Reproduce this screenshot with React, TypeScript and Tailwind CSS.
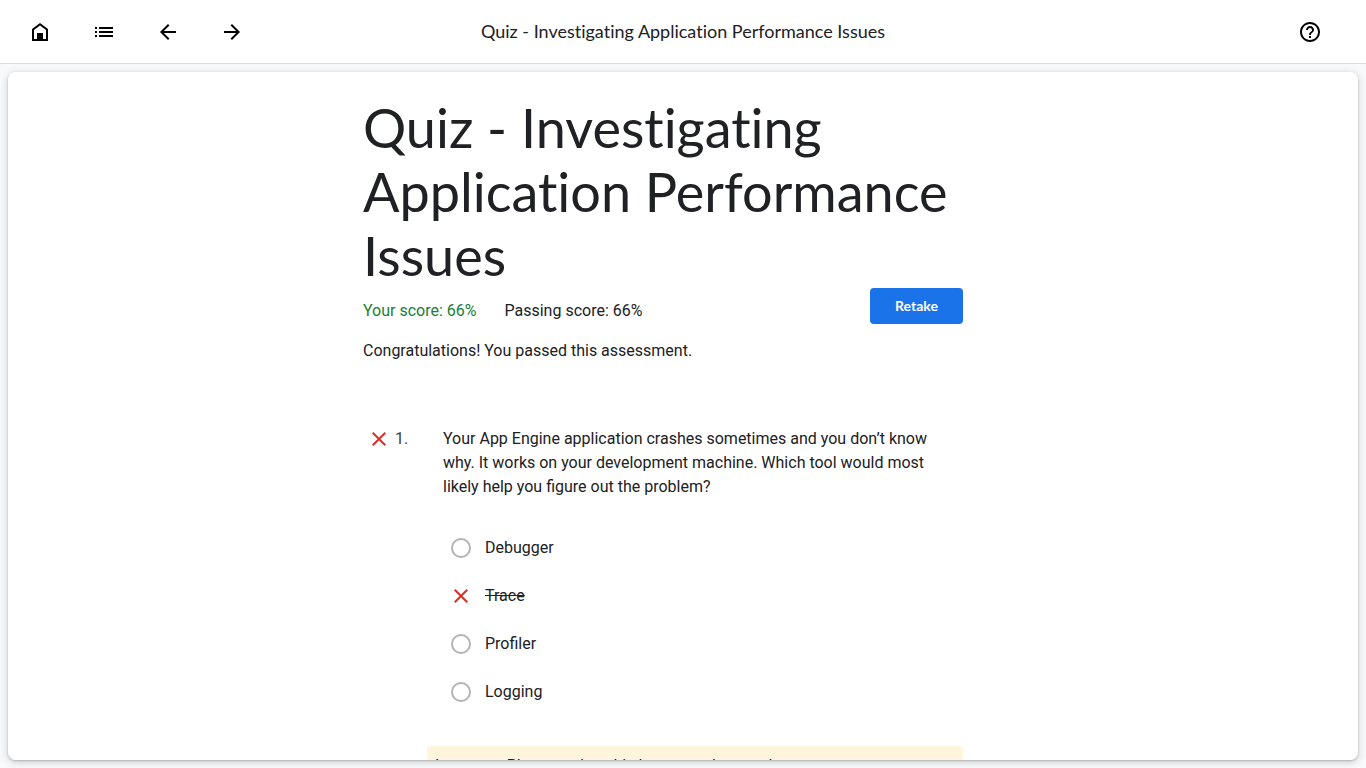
import React, { useState } from "react";

const paths = {
  home: "M4 21V9l8-6 8 6v12H4zM6 19h3v-6h6v6h3v-9l-6-4.5L6 10v9z",
  list: "M3 13h2v-2H3v2zm0 4h2v-2H3v2zm0-8h2V7H3v2zm4 4h14v-2H7v2zm0 4h14v-2H7v2zM7 7v2h14V7H7z",
  back: "M20 11H7.83l5.59-5.59L12 4l-8 8 8 8 1.41-1.41L7.83 13H20v-2z",
  forward: "M12 4l-1.41 1.41L16.17 11H4v2h12.17l-5.58 5.59L12 20l8-8z",
  help: "M11 18h2v-2h-2v2zm1-16C6.48 2 2 6.48 2 12s4.48 10 10 10 10-4.48 10-10S17.52 2 12 2zm0 18c-4.41 0-8-3.59-8-8s3.59-8 8-8 8 3.59 8 8-3.59 8-8 8zm0-14c-2.21 0-4 1.79-4 4h2c0-1.1.9-2 2-2s2 .9 2 2c0 2-3 1.75-3 5h2c0-2.25 3-2.5 3-5 0-2.21-1.79-4-4-4z",
  close:
    "M19 6.41L17.59 5 12 10.59 6.41 5 5 6.41 10.59 12 5 17.59 6.41 19 12 13.41 17.59 19 19 17.59 13.41 12z",
};

function Icon({ name, className = "" }: { name: keyof typeof paths; className?: string }) {
  return (
    <svg viewBox="0 0 24 24" aria-hidden="true" fill="currentColor" className={`size-6 shrink-0 ${className}`}>
      <path d={paths[name]} fillRule={name === "home" ? "evenodd" : "nonzero"} />
    </svg>
  );
}

function IconButton({ name, label }: { name: keyof typeof paths; label: string }) {
  return (
    <button
      type="button"
      aria-label={label}
      className="flex size-12 items-center justify-center rounded-full text-black hover:bg-gray-100"
    >
      <Icon name={name} />
    </button>
  );
}

const options = ["Debugger", "Trace", "Profiler", "Logging"];
const wrongAnswer = "Trace";

function Option({ text, checked, onSelect }: { text: string; checked: boolean; onSelect: () => void }) {
  const wrong = text === wrongAnswer;
  return (
    <label className="flex h-12 items-center gap-3 pl-1.5">
      <input
        type="radio"
        name="question-1"
        checked={checked}
        onChange={onSelect}
        className={
          wrong
            ? "sr-only"
            : "mx-0.5 size-5 shrink-0 appearance-none rounded-full border-2 border-[#b3b3b3] checked:border-[6px] checked:border-[#1a73e8]"
        }
      />
      {wrong && <Icon name="close" className="text-[#d93025]" />}
      <span className={wrong ? "line-through" : ""}>{text}</span>
    </label>
  );
}

export default function App() {
  const [answer, setAnswer] = useState(wrongAnswer);
  return (
    <div className="flex h-screen flex-col bg-[#f8f9fa] font-['Roboto',sans-serif] text-base text-[#202124]">
      <header className="grid h-16 shrink-0 grid-cols-[1fr_auto_1fr] items-center border-b border-[#dadce0] bg-white pr-8 pl-4">
        <nav className="flex gap-4" aria-label="Course">
          <IconButton name="home" label="Home" />
          <IconButton name="list" label="Course outline" />
          <IconButton name="back" label="Previous" />
          <IconButton name="forward" label="Next" />
        </nav>
        <div className="pb-0.5 pl-4 font-['Lato',sans-serif] text-lg [font-variant-ligatures:none]">
          Quiz - Investigating Application Performance Issues
        </div>
        <div className="flex justify-end">
          <IconButton name="help" label="Help" />
        </div>
      </header>

      <main className="m-2 min-h-0 flex-1 overflow-y-auto rounded-lg bg-white shadow-[0_1px_2px_rgba(60,64,67,0.3),0_2px_6px_2px_rgba(60,64,67,0.15)] [scrollbar-width:none]">
        <div className="mx-auto max-w-[640px] pt-6 pr-10 pb-12">
          <h1 className="font-['Lato',sans-serif] text-[54px] leading-[64px] [font-variant-ligatures:none]">
            Quiz - Investigating Application Performance Issues
          </h1>
          <div className="flex items-start justify-between">
            <p className="flex gap-7 pt-[11px]">
              <span className="text-[#188038]">Your score: 66%</span>
              <span>Passing score: 66%</span>
            </p>
            <button
              type="button"
              className="h-9 min-w-[93px] rounded bg-[#1a73e8] px-4 font-['Lato',sans-serif] text-sm font-bold text-white hover:bg-[#1765cc]"
            >
              Retake
            </button>
          </div>
          <p className="mt-[15px]">Congratulations! You passed this assessment.</p>

          <section className="mt-16 flex">
            <div className="flex h-6 w-16 shrink-0 items-center gap-1 pl-1">
              <Icon name="close" className="text-[#d93025]" />
              <span className="text-[#3c4043]">1.</span>
            </div>
            <div className="min-w-0 flex-1">
              <fieldset>
                <legend className="px-4">
                  Your App Engine application crashes sometimes and you don’t know why. It works on your development
                  machine. Which tool would most likely help you figure out the problem?
                </legend>
                <div className="px-4 pt-[25px]">
                  {options.map((text) => (
                    <Option key={text} text={text} checked={answer === text} onSelect={() => setAnswer(text)} />
                  ))}
                </div>
              </fieldset>
              <p className="mt-[30px] rounded bg-[#fdf6dd] p-2">Incorrect. Please review this lesson and try again.</p>
            </div>
          </section>
        </div>
      </main>
    </div>
  );
}
